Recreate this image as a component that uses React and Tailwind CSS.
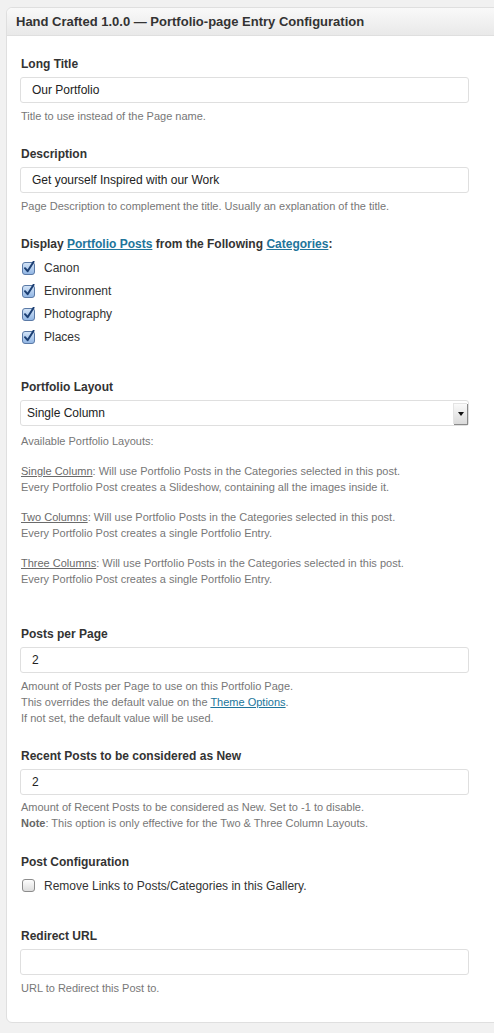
import { useState } from "react";

const FONT = { fontFamily: '"Liberation Sans", Arial, sans-serif' };

const CATEGORIES = ["Canon", "Environment", "Photography", "Places"];

const LAYOUTS = [
  {
    name: "Single Column",
    lines: [
      "Will use Portfolio Posts in the Categories selected in this post.",
      "Every Portfolio Post creates a Slideshow, containing all the images inside it.",
    ],
  },
  {
    name: "Two Columns",
    lines: [
      "Will use Portfolio Posts in the Categories selected in this post.",
      "Every Portfolio Post creates a single Portfolio Entry.",
    ],
  },
  {
    name: "Three Columns",
    lines: [
      "Will use Portfolio Posts in the Categories selected in this post.",
      "Every Portfolio Post creates a single Portfolio Entry.",
    ],
  },
];

function Box({ checked }) {
  if (!checked) {
    return (
      <svg width="13" height="13" viewBox="0 0 13 13">
        <defs>
          <linearGradient id="cbOff" x1="0" y1="0" x2="0" y2="1">
            <stop offset="0" stopColor="#ffffff" />
            <stop offset="1" stopColor="#dcdcdc" />
          </linearGradient>
        </defs>
        <rect x="0.5" y="0.5" width="12" height="12" rx="2.5" fill="url(#cbOff)" stroke="#8c8c8c" />
      </svg>
    );
  }
  return (
    <svg width="13" height="14" viewBox="0 0 13 14">
      <defs>
        <linearGradient id="cbOn" x1="0" y1="0" x2="0" y2="1">
          <stop offset="0" stopColor="#d6e6f8" />
          <stop offset="1" stopColor="#8fb4e3" />
        </linearGradient>
      </defs>
      <rect x="0.5" y="1.5" width="12" height="12" rx="2.5" fill="url(#cbOn)" stroke="#5b7aa6" />
      <path d="M3 7.2 L5.6 10.2 L11.6 0.8" fill="none" stroke="#1c3f73" strokeWidth="2" strokeLinecap="round" strokeLinejoin="round" />
    </svg>
  );
}

function Label({ children, className = "" }) {
  return (
    <div className={`text-[12px] leading-[16px] font-bold text-[#333] pl-[1px] ${className}`}>
      {children}
    </div>
  );
}

function Help({ children, className = "" }) {
  return (
    <div className={`text-[11px] leading-[16px] text-[#777] pl-[1px] ${className}`}>{children}</div>
  );
}

function TextInput({ value }) {
  return (
    <div className="mt-[5px] h-[26px] w-[449px] rounded-[3px] border border-[#dfdfdf] bg-white pl-[11px] flex items-center text-[12px] text-[#222]">
      {value}
    </div>
  );
}

function CheckRow({ checked, label }) {
  return (
    <div className="h-[23px] flex items-center gap-[9px] pl-[2px] text-[12px] text-[#333]">
      <Box checked={checked} />
      <span>{label}</span>
    </div>
  );
}

export default function App() {
  const [layout] = useState("Single Column");

  return (
    <div className="min-h-screen w-full overflow-hidden bg-[#f1f1f1] pt-[7px] pl-[6px]" style={FONT}>
      <div className="w-[520px] rounded-l-[6px] border border-[#dfdfdf] bg-white">
        {/* header */}
        <div className="h-[28px] flex items-center pl-[9px] rounded-tl-[6px] border-b border-[#dfdfdf] bg-gradient-to-b from-[#f9f9f9] to-[#e9e9e9] text-[13px] font-bold text-[#333]">
          Hand Crafted 1.0.0 — Portfolio-page Entry Configuration
        </div>

        <div className="pl-[13px] pt-[20px] pb-[26px]">
          <Label>Long Title</Label>
          <TextInput value="Our Portfolio" />
          <Help className="mt-[5px]">Title to use instead of the Page name.</Help>

          <Label className="mt-[22px]">Description</Label>
          <TextInput value="Get yourself Inspired with our Work" />
          <Help className="mt-[5px]">
            Page Description to complement the title. Usually an explanation of the title.
          </Help>

          <Label className="mt-[22px]">
            Display <a className="text-[#21759b] underline">Portfolio Posts</a> from the Following{" "}
            <a className="text-[#21759b] underline">Categories</a>:
          </Label>
          <div className="mt-[4px]">
            {CATEGORIES.map((c) => (
              <CheckRow key={c} checked label={c} />
            ))}
          </div>

          <Label className="mt-[31px]">Portfolio Layout</Label>
          <div className="mt-[5px] h-[26px] w-[449px] rounded-[3px] border border-[#dfdfdf] bg-white pl-[6px] flex items-center justify-between text-[12px] text-[#222]">
            <span>{layout}</span>
            <div className="mr-[1px] h-[21px] w-[14px] flex items-center justify-center border-l border-t border-[#e4e4e4] bg-gradient-to-b from-[#fafafa] to-[#dadada] shadow-[1px_1px_0_#8a8a8a]">
              <div className="h-0 w-0 border-l-[3px] border-r-[3px] border-t-[4px] border-l-transparent border-r-transparent border-t-[#111]" />
            </div>
          </div>
          <Help className="mt-[7px]">Available Portfolio Layouts:</Help>
          {LAYOUTS.map((l) => (
            <Help key={l.name} className="mt-[14px]">
              <div>
                <span className="underline text-[#6a6a6a]">{l.name}</span>: {l.lines[0]}
              </div>
              <div>{l.lines[1]}</div>
            </Help>
          ))}

          <Label className="mt-[39px]">Posts per Page</Label>
          <TextInput value="2" />
          <Help className="mt-[5px]">
            <div>Amount of Posts per Page to use on this Portfolio Page.</div>
            <div>
              This overrides the default value on the{" "}
              <a className="text-[#21759b] underline">Theme Options</a>.
            </div>
            <div>If not set, the default value will be used.</div>
          </Help>

          <Label className="mt-[22px]">Recent Posts to be considered as New</Label>
          <TextInput value="2" />
          <Help className="mt-[4px]">
            <div>Amount of Recent Posts to be considered as New. Set to -1 to disable.</div>
            <div>
              <span className="font-bold text-[#666]">Note</span>: This option is only effective for the
              Two &amp; Three Column Layouts.
            </div>
          </Help>

          <Label className="mt-[23px]">Post Configuration</Label>
          <div className="mt-[4px]">
            <CheckRow checked={false} label="Remove Links to Posts/Categories in this Gallery." />
          </div>

          <Label className="mt-[31px]">Redirect URL</Label>
          <TextInput value="" />
          <Help className="mt-[5px]">URL to Redirect this Post to.</Help>
        </div>
      </div>
    </div>
  );
}
